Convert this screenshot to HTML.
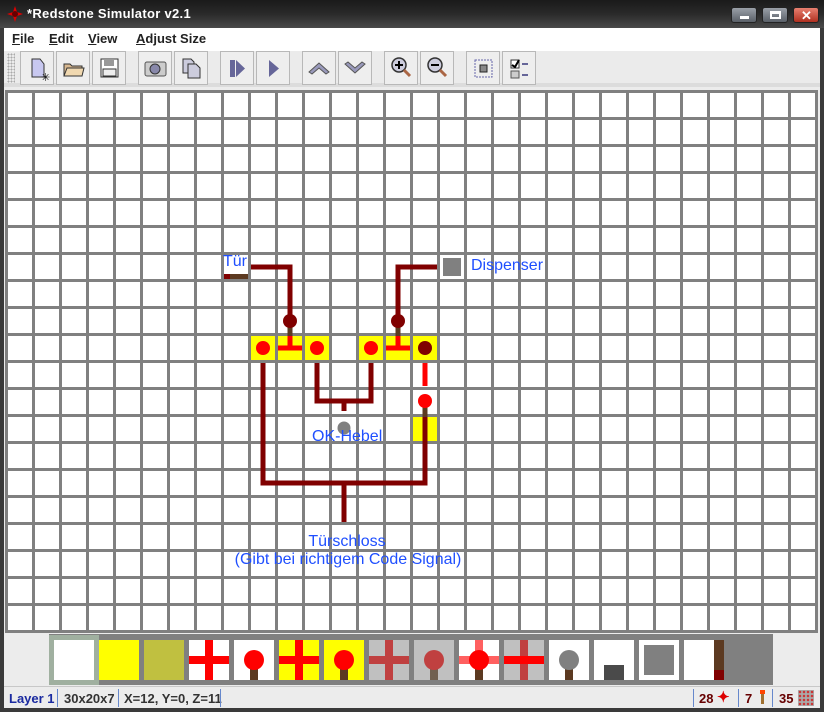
<!DOCTYPE html>
<html><head><meta charset="utf-8"><style>
*{margin:0;padding:0;box-sizing:border-box}
body{width:824px;height:712px;overflow:hidden;background:#3a3a3a;font-family:"Liberation Sans",sans-serif;position:relative}
.abs{position:absolute}
#title{left:0;top:0;width:824px;height:28px;background:linear-gradient(#1a1a1a,#2a2a2a 50%,#4a4a4a);}
#title .t{left:27px;top:6px;color:#fff;font-weight:bold;font-size:13px;letter-spacing:0.3px}
.wb{top:7px;width:26px;height:16px;border:1px solid #222;border-radius:3px;background:linear-gradient(#9aa0a8,#5a6068);}
#frame{left:4px;top:28px;width:816px;height:680px;background:#ececec}
#menu{left:4px;top:28px;width:816px;height:23px;background:#fff;font-size:13px;font-weight:bold;color:#222}
#menu span{position:absolute;top:3px}
#tb{left:4px;top:51px;width:816px;height:36px;background:#ebebeb;border-bottom:4px solid #dcdcdc}
.btn{position:absolute;top:0;width:34px;height:34px;border:1px solid #b8b8b8;background:#eeeeee}
#grid{left:5px;top:90px;width:813px;height:543px;background-color:#fff;
background-image:linear-gradient(90deg,#808080 3px,transparent 3px),linear-gradient(#808080 3px,transparent 3px);background-size:27px 27px}
#pal{left:49px;top:634px;width:724px;height:51px;background:#808080}
#status{left:4px;top:686px;width:816px;height:22px;background:#ececec;border-top:1px solid #c8c8c8;font-size:13px;font-weight:bold;color:#333}
#status span{position:absolute;top:4px}
.sep{position:absolute;top:2px;width:1px;height:18px;background:#6688cc}
.lbl{position:absolute;color:#1f4fff;font-size:16px;white-space:nowrap}
</style></head><body>
<div id="title" class="abs">
<svg class="abs" style="left:6px;top:5px" width="18" height="18" viewBox="0 0 18 18"><path d="M9 1 L11 7 L17 9 L11 11 L9 17 L7 11 L1 9 L7 7Z" fill="#d00"/><circle cx="9" cy="9" r="3" fill="#600"/></svg>
<div class="abs t">*Redstone Simulator v2.1</div>
<div class="abs wb" style="left:731px"><div style="position:absolute;left:8px;top:8px;width:9px;height:3px;background:#fff"></div></div>
<div class="abs wb" style="left:762px"><div style="position:absolute;left:7px;top:3px;width:11px;height:8px;border:2px solid #fff;border-top-width:3px"></div></div>
<div class="abs wb" style="left:793px;background:linear-gradient(#e88070,#b03020)"><div style="position:absolute;left:7px;top:0px;color:#fff;font-size:13px;font-weight:bold">✕</div></div>
</div>
<div id="frame" class="abs"></div>
<div id="menu" class="abs">
<span style="left:8px"><u>F</u>ile</span><span style="left:45px"><u>E</u>dit</span><span style="left:84px"><u>V</u>iew</span><span style="left:132px"><u>A</u>djust Size</span>
</div>
<div id="tb" class="abs">
<div style="position:absolute;left:3px;top:2px;width:8px;height:30px;background-image:radial-gradient(#aaa 0.8px,transparent 1px);background-size:3px 3px"></div>
<div class="btn" style="left:16px"><svg width="32" height="32"><path d="M11 7 h8 l4 5 v13 h-12z" fill="#c8c8f0" stroke="#333"/><text x="20" y="29" font-size="11" fill="#000">✳</text></svg></div>
<div class="btn" style="left:52px"><svg width="32" height="32"><path d="M7 12 h6 l2 2 h10 v10 h-18z" fill="#d8b890" stroke="#333"/><path d="M7 24 l3 -8 h17 l-2 8z" fill="#f0d8b0" stroke="#333"/></svg></div>
<div class="btn" style="left:88px"><svg width="32" height="32"><rect x="8" y="7" width="17" height="18" fill="#fff" stroke="#333"/><rect x="11" y="8" width="10" height="6" fill="#999"/><rect x="10" y="17" width="13" height="7" fill="#eee" stroke="#333"/></svg></div>
<div class="btn" style="left:134px"><svg width="32" height="32"><rect x="6" y="10" width="21" height="14" rx="2" fill="#ccc" stroke="#555"/><circle cx="16" cy="17" r="5" fill="#88a" stroke="#333"/></svg></div>
<div class="btn" style="left:170px"><svg width="32" height="32"><path d="M8 7 h8 l3 3 v11 h-11z" fill="#ccd" stroke="#333"/><path d="M13 12 h8 l4 4 v10 h-12z" fill="#ccd" stroke="#333"/></svg></div>
<div class="btn" style="left:216px"><svg width="32" height="32"><rect x="9" y="8" width="5" height="17" fill="#669" /><path d="M15 8 l9 8.5 -9 8.5z" fill="#669"/></svg></div>
<div class="btn" style="left:252px"><svg width="32" height="32"><path d="M12 8 l10 8.5 -10 8.5z" fill="#669"/></svg></div>
<div class="btn" style="left:298px"><svg width="32" height="32"><path d="M6 20 l10 -9 10 9 -3 2 -7 -6 -7 6z" fill="#99b" stroke="#555"/></svg></div>
<div class="btn" style="left:334px"><svg width="32" height="32"><path d="M6 12 l10 9 10 -9 -3 -2 -7 6 -7 -6z" fill="#99b" stroke="#555"/></svg></div>
<div class="btn" style="left:380px"><svg width="32" height="32"><circle cx="14" cy="13" r="7" fill="#ccd" stroke="#333" stroke-width="1.5"/><path d="M10 13h8M14 9v8" stroke="#000" stroke-width="2"/><path d="M19 18 l6 6" stroke="#a64" stroke-width="3"/></svg></div>
<div class="btn" style="left:416px"><svg width="32" height="32"><circle cx="14" cy="13" r="7" fill="#ccd" stroke="#333" stroke-width="1.5"/><path d="M10 13h8" stroke="#000" stroke-width="2"/><path d="M19 18 l6 6" stroke="#a64" stroke-width="3"/></svg></div>
<div class="btn" style="left:462px"><svg width="32" height="32"><rect x="8" y="8" width="17" height="17" fill="none" stroke="#66a" stroke-dasharray="2 1"/><rect x="13" y="13" width="7" height="7" fill="#888" stroke="#222"/></svg></div>
<div class="btn" style="left:498px"><svg width="32" height="32"><rect x="8" y="8" width="8" height="8" fill="#fff" stroke="#333"/><path d="M9 13 l3 2 4 -7" stroke="#000" stroke-width="2" fill="none"/><rect x="8" y="19" width="8" height="7" fill="#ccc" stroke="#555"/><path d="M19 12h6M19 23h6" stroke="#669" stroke-width="2"/></svg></div>
</div>
<div id="grid" class="abs"></div>
<svg class="abs" style="left:0;top:0" width="824" height="712">
<g fill="none" stroke="#800000" stroke-width="5">
<path d="M251 267 H290 V318"/>
<path d="M398 318 V267 H437"/>
<path d="M263 363 V483 H425 V417"/>
<path d="M317 363 V401 H371 V363"/>
<path d="M344 401 V411"/>
<path d="M344 483 V522"/>
</g>
<rect x="224" y="274" width="6" height="5" fill="#800000"/><rect x="230" y="274" width="18" height="5" fill="#5c3a21"/>
<rect x="443" y="258" width="18" height="18" fill="#808080"/>
<g fill="#ffff00"><rect x="251" y="336" width="24" height="24"/><rect x="278" y="336" width="24" height="24"/><rect x="305" y="336" width="24" height="24"/><rect x="359" y="336" width="24" height="24"/><rect x="386" y="336" width="24" height="24"/><rect x="413" y="336" width="24" height="24"/><rect x="413" y="417" width="24" height="24"/></g>
<path d="M425 417 V441" stroke="#800000" stroke-width="5"/>
<path d="M290 327 V336 M398 327 V336 M425 405 V417" stroke="#5c3a21" stroke-width="5"/>
<circle cx="290" cy="321" r="7" fill="#800000"/><circle cx="398" cy="321" r="7" fill="#800000"/>
<g stroke="#ff0000" stroke-width="5" fill="none"><path d="M278 348 H302 M290 336 V348"/><path d="M386 348 H410 M398 336 V348"/><path d="M425 363 V386"/></g>
<g fill="#ff0000"><circle cx="263" cy="348" r="7"/><circle cx="317" cy="348" r="7"/><circle cx="371" cy="348" r="7"/><circle cx="425" cy="401" r="7"/></g>
<circle cx="425" cy="348" r="7" fill="#800000"/>
<circle cx="344" cy="428" r="6.5" fill="#808080"/>
</svg>
<div class="lbl" style="left:223px;top:253px">Tür</div>
<div class="lbl" style="left:471px;top:257px">Dispenser</div>
<div class="lbl" style="left:312px;top:428px">OK-Hebel</div>
<div class="lbl" style="left:247px;top:533px;width:200px;text-align:center">Türschloss</div>
<div class="lbl" style="left:198px;top:551px;width:300px;text-align:center">(Gibt bei richtigem Code Signal)</div>
<div id="pal" class="abs"></div>
<svg class="abs" style="left:0;top:0" width="824" height="712">
<rect x="49" y="635" width="50" height="50" fill="#a0b0a0"/>
<rect x="54" y="640" width="40" height="40" fill="#fff"/>
<rect x="99" y="640" width="40" height="40" fill="#ffff00"/>
<rect x="144" y="640" width="40" height="40" fill="#c0c040"/>
<rect x="189" y="640" width="40" height="40" fill="#fff"/><path d="M189 660h40M209 640v40" stroke="#f00" stroke-width="8"/>
<rect x="234" y="640" width="40" height="40" fill="#fff"/><rect x="250" y="666" width="8" height="14" fill="#5c3a21"/><circle cx="254" cy="660" r="10" fill="#f00"/>
<rect x="279" y="640" width="40" height="40" fill="#ff0"/><path d="M279 660h40M299 640v40" stroke="#f00" stroke-width="8"/>
<rect x="324" y="640" width="40" height="40" fill="#ff0"/><rect x="340" y="666" width="8" height="14" fill="#5c3a21"/><circle cx="344" cy="660" r="10" fill="#f00"/>
<rect x="369" y="640" width="40" height="40" fill="#c0c0c0"/><path d="M369 660h40M389 640v40" stroke="#c04040" stroke-width="8"/>
<rect x="414" y="640" width="40" height="40" fill="#c0c0c0"/><rect x="430" y="666" width="8" height="14" fill="#706050"/><circle cx="434" cy="660" r="10" fill="#c04040"/>
<rect x="459" y="640" width="40" height="40" fill="#fff"/><path d="M459 660h40M479 640v40" stroke="#ff6060" stroke-width="8"/><rect x="475" y="666" width="8" height="14" fill="#5c3a21"/><circle cx="479" cy="660" r="10" fill="#f00"/>
<rect x="504" y="640" width="40" height="40" fill="#c0c0c0"/><path d="M524 640v40" stroke="#c04040" stroke-width="8"/><path d="M504 660h40" stroke="#f00" stroke-width="8"/>
<rect x="549" y="640" width="40" height="40" fill="#fff"/><rect x="565" y="666" width="8" height="14" fill="#5c3a21"/><circle cx="569" cy="660" r="10" fill="#808080"/>
<rect x="594" y="640" width="40" height="40" fill="#fff"/><rect x="604" y="665" width="20" height="15" fill="#4a4a4a"/>
<rect x="639" y="640" width="40" height="40" fill="#fff"/><rect x="644" y="645" width="30" height="30" fill="#808080"/>
<rect x="684" y="640" width="40" height="40" fill="#fff"/><rect x="714" y="640" width="10" height="30" fill="#5c3a21"/><rect x="714" y="670" width="10" height="10" fill="#800000"/>
</svg>
<div id="status" class="abs">
<span style="left:5px;color:#1a2aa0">Layer 1</span><div class="sep" style="left:53px"></div>
<span style="left:60px">30x20x7</span><div class="sep" style="left:114px"></div>
<span style="left:120px">X=12, Y=0, Z=11</span><div class="sep" style="left:216px"></div>
<div class="sep" style="left:689px"></div><span style="left:695px;color:#600">28</span>
<span style="left:713px;top:1px;color:#d00;font-size:15px">✦</span>
<div class="sep" style="left:734px"></div><span style="left:741px;color:#600">7</span>
<div style="position:absolute;left:757px;top:5px;width:3px;height:12px;background:#a07030"></div><div style="position:absolute;left:756px;top:3px;width:5px;height:4px;background:#f40"></div>
<div class="sep" style="left:768px"></div><span style="left:775px;color:#600">35</span>
<div style="position:absolute;left:794px;top:3px;width:16px;height:16px;background:#aaa;background-image:radial-gradient(#c33 1px,transparent 1.5px);background-size:4px 4px"></div>
</div>
</body></html>
